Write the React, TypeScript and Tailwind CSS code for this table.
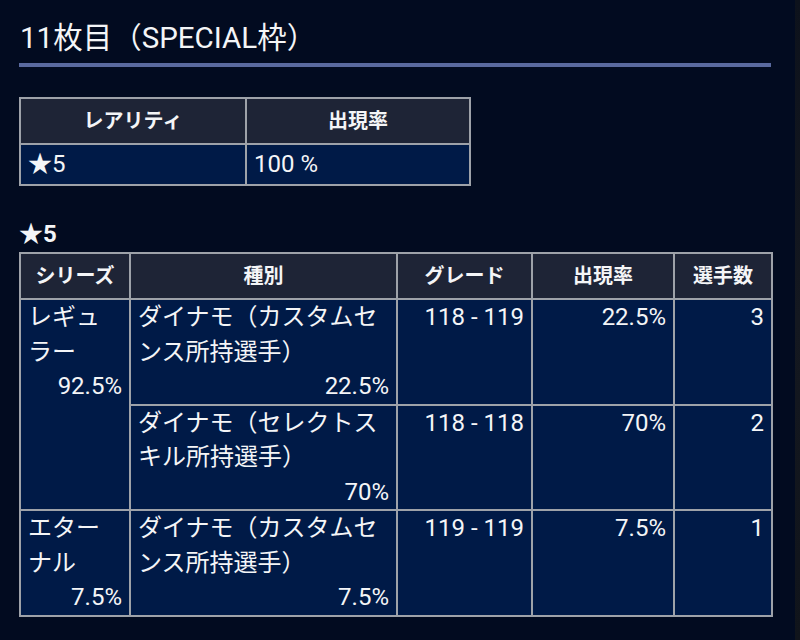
import React from "react";

const rows = [
  {
    series: ["レギュ", "ラー"],
    seriesRate: "92.5%",
    span: 2,
    kind: ["ダイナモ（カスタムセ", "ンス所持選手）"],
    kindRate: "22.5%",
    grade: "118 - 119",
    rate: "22.5%",
    count: "3",
  },
  {
    kind: ["ダイナモ（セレクトス", "キル所持選手）"],
    kindRate: "70%",
    grade: "118 - 118",
    rate: "70%",
    count: "2",
  },
  {
    series: ["エター", "ナル"],
    seriesRate: "7.5%",
    span: 1,
    kind: ["ダイナモ（カスタムセ", "ンス所持選手）"],
    kindRate: "7.5%",
    grade: "119 - 119",
    rate: "7.5%",
    count: "1",
  },
];

const th = "border-2 border-[#9ea2a9] bg-[#1e2436] text-[20px] font-bold leading-[34px] py-[5px] text-center";
const td = "border-2 border-[#9ea2a9] bg-[#001a47] text-[24px] leading-[34.5px] px-[7px] align-top";

export default function App() {
  return (
    <div className="flex min-h-[640px] bg-[#020b20] text-[#f4f5f7] font-['Roboto','Noto_Sans_CJK_JP',sans-serif]">
      <div className="flex-1 pl-[19px] pt-[18px]">
        <div className="w-[752px]">
          {/* Section title */}
          <h2 className="text-[29.5px] leading-[40px] pl-px pb-[5px] border-b-4 border-[#5a6a9f]">
            11枚目（SPECIAL枠）
          </h2>

          {/* Rarity table */}
          <table className="mt-[30px] w-[450px] table-fixed border-collapse">
            <colgroup>
              <col className="w-[226px]" />
              <col className="w-[224px]" />
            </colgroup>
            <thead>
              <tr>
                <th className={th}>レアリティ</th>
                <th className={th}>出現率</th>
              </tr>
            </thead>
            <tbody>
              <tr>
                <td className="border-2 border-[#9ea2a9] bg-[#001a47] text-[24px] leading-[35px] py-[2px] px-[7px]">★5</td>
                <td className="border-2 border-[#9ea2a9] bg-[#001a47] text-[24px] leading-[35px] py-[2px] px-[7px]">100 %</td>
              </tr>
            </tbody>
          </table>

          <h3 className="mt-[30px] text-[24px] font-bold leading-[36px]">★5</h3>

          {/* Detail table */}
          <table className="w-[752px] table-fixed border-collapse">
            <colgroup>
              <col className="w-[110px]" />
              <col className="w-[267px]" />
              <col className="w-[135px]" />
              <col className="w-[142px]" />
              <col className="w-[98px]" />
            </colgroup>
            <thead>
              <tr>
                <th className={th}>シリーズ</th>
                <th className={th}>種別</th>
                <th className={th}>グレード</th>
                <th className={th}>出現率</th>
                <th className={th}>選手数</th>
              </tr>
            </thead>
            <tbody>
              {rows.map((r, i) => (
                <tr key={i}>
                  {r.series && (
                    <td rowSpan={r.span} className={td}>
                      <div>{r.series[0]}</div>
                      <div>{r.series[1]}</div>
                      <div className="text-right">{r.seriesRate}</div>
                    </td>
                  )}
                  <td className={td}>
                    <div>{r.kind[0]}</div>
                    <div>{r.kind[1]}</div>
                    <div className="text-right">{r.kindRate}</div>
                  </td>
                  <td className={`${td} text-right`}>{r.grade}</td>
                  <td className={`${td} text-right`}>{r.rate}</td>
                  <td className={`${td} text-right`}>{r.count}</td>
                </tr>
              ))}
            </tbody>
          </table>
        </div>
      </div>
      <div className="w-[5px] bg-gradient-to-b from-[#0d121c] via-[#141820] to-[#10141b]" />
    </div>
  );
}
